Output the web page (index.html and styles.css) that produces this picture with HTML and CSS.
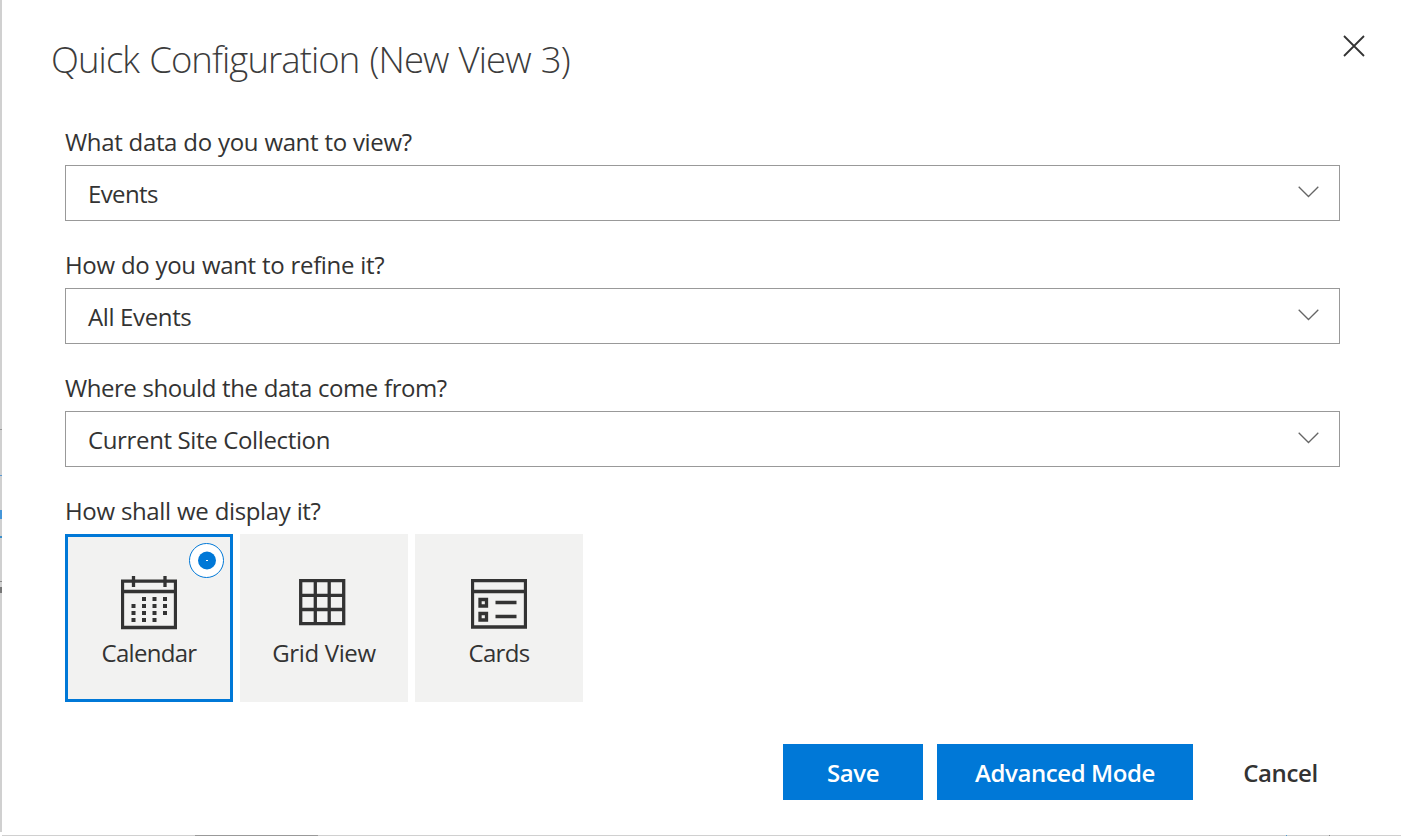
FILE: index.html
```html
<!DOCTYPE html>
<html lang="en">
<head>
  <meta charset="utf-8">
  <title>Quick Configuration</title>
  <meta name="viewport" content="width=device-width, initial-scale=1.0">
  <link rel="stylesheet" href="styles.css">
</head>
<body>
  <div class="page-left"></div>
  <div class="dialog">
    <div class="dialog-header">
      <h1>Quick Configuration (New View 3)</h1>
      <button class="close" aria-label="Close">
        <svg width="24" height="24" viewBox="0 0 24 24"><path d="M2 2L22 22M22 2L2 22"/></svg>
      </button>
    </div>

    <div class="dialog-body">
      <div class="field">
        <div class="label">What data do you want to view?</div>
        <div class="dropdown">
          <span class="value-data">Events</span>
          <svg class="chevron" width="22" height="12" viewBox="0 0 22 12"><path d="M.7 .7L10.5 10.5L20.3 .7"/></svg>
        </div>
      </div>
      <div class="field">
        <div class="label">How do you want to refine it?</div>
        <div class="dropdown">
          <span>All Events</span>
          <svg class="chevron" width="22" height="12" viewBox="0 0 22 12"><path d="M.7 .7L10.5 10.5L20.3 .7"/></svg>
        </div>
      </div>
      <div class="field">
        <div class="label label-source">Where should the data come from?</div>
        <div class="dropdown">
          <span>Current Site Collection</span>
          <svg class="chevron" width="22" height="12" viewBox="0 0 22 12"><path d="M.7 .7L10.5 10.5L20.3 .7"/></svg>
        </div>
      </div>
      <div class="field">
        <div class="label">How shall we display it?</div>
        <div class="choices">
          <div class="choice selected">
            <svg class="radio" width="36" height="36" viewBox="0 0 36 36">
              <circle class="ring" cx="17.5" cy="17.5" r="17"/>
              <circle class="dot" cx="18" cy="17.5" r="9"/>
              <rect class="pin" x="17" y="17" width="2" height="1"/>
            </svg>
            <svg class="icon" width="56" height="54" viewBox="0 0 56 54">
              <path class="line" d="M1.5 5.2H54.5V51.5H1.5ZM1.5 15.5H54.5"/>
              <path class="line" d="M12.5 0V11M44 0V11"/>
              <path class="fill" d="M21 21h4v4h-4zM31.5 21h4v4h-4zM42 21h4v4h-4z
                M10.5 28h4v4h-4zM21 28h4v4h-4zM31.5 28h4v4h-4zM42 28h4v4h-4z
                M10.5 35h4v4h-4zM21 35h4v4h-4zM31.5 35h4v4h-4zM42 35h4v4h-4z
                M10.5 42h4v4h-4zM21 42h4v4h-4zM31.5 42h4v4h-4z"/>
            </svg>
            <span class="tight">Calendar</span>
          </div>
          <div class="choice">
            <svg class="icon" width="56" height="54" viewBox="0 0 56 54">
              <path class="line" d="M4.7 4.7H47.7V47.7H4.7ZM19.3 4V49M33.2 4V49M4 19.3H48M4 33.5H48"/>
            </svg>
            <span>Grid View</span>
          </div>
          <div class="choice">
            <svg class="icon" width="56" height="54" viewBox="0 0 56 54">
              <path class="line" d="M1.5 4.7H54.5V51H1.5ZM1.5 15.5H54.5"/>
              <path class="line" d="M9 23.5h6.5v6.5H9ZM9 37.5h6.5v6.5H9ZM24.5 26.5H45.5M24.5 40.5H45.5"/>
            </svg>
            <span class="tight">Cards</span>
          </div>
        </div>
      </div>
    </div>

    <div class="dialog-footer">
      <button class="primary save">Save</button>
      <button class="primary advanced">Advanced Mode</button>
      <button class="cancel">Cancel</button>
    </div>
  </div>
</body>
</html>
```

FILE: styles.css
```css
* {
  box-sizing: border-box;
}

body {
  margin: 0;
  width: 1401px;
  height: 836px;
  display: flex;
  overflow: hidden;
  background: #fff;
  color: #333;
  font-family: "Segoe UI", "Open Sans", "Noto Sans", sans-serif;
  font-size: 24px;
  font-weight: 370;
  letter-spacing: -0.36px;
}

/* strip of the page still showing beside the dialog */
.page-left {
  width: 2px;
  height: 832px;
  background: linear-gradient(#d0d0d0 429px, #999 429px 430px, #d0d0d0 430px 475px,
    #5a9bd5 475px 476px, #d0d0d0 476px 510px, #4596d8 510px 519px, #d0d0d0 519px 536px,
    #3b8fca 536px 538px, #d0d0d0 538px 581px, #888 581px 582px, #d0d0d0 582px 587px,
    #777 587px 593px, #d0d0d0 593px);
}

.dialog {
  flex: 1;
  display: flex;
  flex-direction: column;
  border-bottom: 1px solid;
  border-image: linear-gradient(90deg, #d0d0d0 194px, #999 194px 317px, #d0d0d0 317px 1283px,
    #4b9bd0 1283px 1284px, #d0d0d0 1284px 1326px, #888 1326px 1327px, #d0d0d0 1327px) 1;
}

.dialog-header {
  display: flex;
  justify-content: space-between;
  height: 119px;
  padding: 32px 35px 0 49px;
}

h1 {
  margin: 0;
  color: #3c3c3c;
  font-weight: 300;
  font-size: 36.5px;
  line-height: 54px;
  letter-spacing: -0.92px;
  word-spacing: 1.5px;
  white-space: nowrap;
}

button {
  border: none;
  padding: 0;
  background: none;
  color: #333;
  font-family: inherit;
  font-size: 24px;
  letter-spacing: -0.4px;
}

.close {
  width: 24px;
  height: 24px;
  margin-top: 2px;
}

svg {
  display: block;
}

.close path {
  fill: none;
  stroke: #333;
  stroke-width: 1.8;
}

.dialog-body {
  padding: 0 61px 0 63px;
}

.field {
  margin-bottom: 21px;
}

.label {
  height: 46px;
  line-height: 46px;
  word-spacing: 0.4px;
  white-space: nowrap;
}

.label-source {
  letter-spacing: -0.45px;
}

.dropdown {
  display: flex;
  align-items: center;
  justify-content: space-between;
  height: 56px;
  padding: 0 19px 0 22px;
  border: 1px solid #999;
}

.value-data {
  letter-spacing: -0.6px;
}

.chevron {
  margin-top: -2px;
}

.chevron path {
  fill: none;
  stroke: #666;
  stroke-width: 1.3;
}

.choices {
  display: flex;
  gap: 7px;
}

.choice {
  position: relative;
  display: flex;
  flex-direction: column;
  align-items: center;
  width: 168px;
  height: 168px;
  padding-top: 42px;
  background: #f2f2f1;
  line-height: 46px;
}

.choice.selected {
  padding-top: 39px;
  border: 3px solid #0078d7;
}

.choice .tight {
  letter-spacing: -0.7px;
}

.icon .line {
  fill: none;
  stroke: #333;
  stroke-width: 3.3;
}

.icon .fill {
  fill: #333;
}

.radio {
  position: absolute;
  top: 6px;
  right: 5px;
}

.radio .ring {
  fill: #fff;
  stroke: #0078d7;
}

.radio .dot {
  fill: #0078d7;
}

.radio .pin {
  fill: #fff;
}

.dialog-footer {
  display: flex;
  gap: 14px;
  margin-top: 21px;
  padding-left: 781px;
}

.dialog-footer button {
  height: 56px;
  font-weight: 600;
}

.dialog-footer .primary {
  background: #0078d7;
  color: #fff;
}

.dialog-footer .save {
  width: 140px;
}

.dialog-footer .advanced {
  width: 256px;
}

.dialog-footer .cancel {
  width: 147px;
  font-weight: 550;
}
```
